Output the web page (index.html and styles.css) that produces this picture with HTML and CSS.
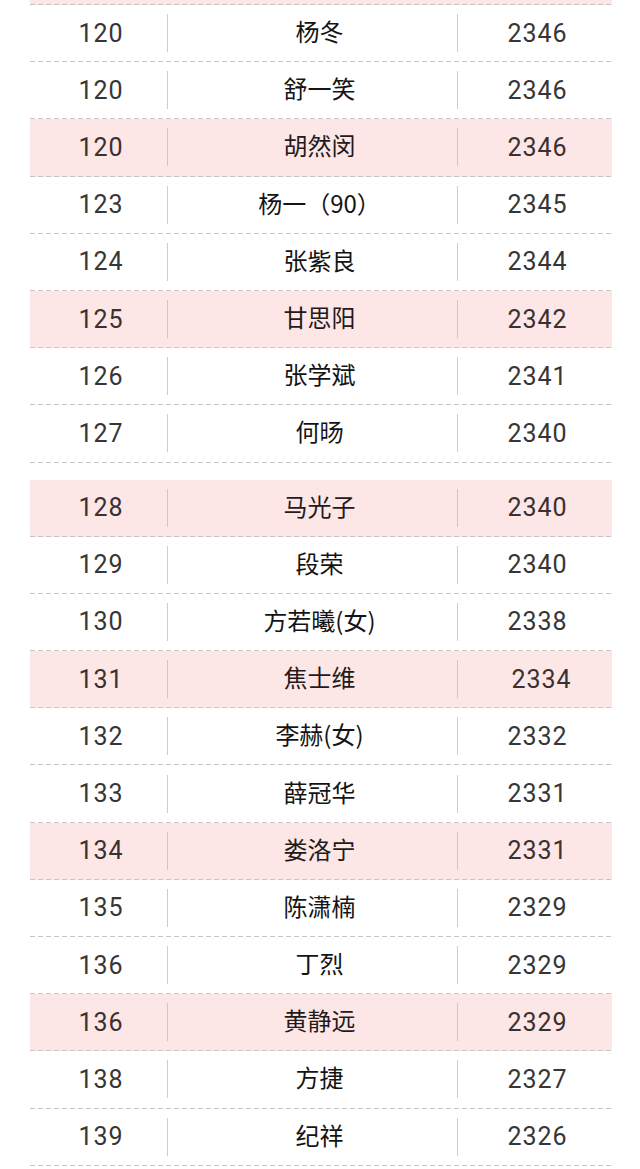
FILE: index.html
```html
<!DOCTYPE html>
<html lang="zh-CN">
<head>
<meta charset="utf-8">
<title>排名</title>
<link rel="stylesheet" href="styles.css">
</head>
<body>
<div class="sheet">
  <div class="cut pink"></div>
  <div class="block">
    <div class="row"><span class="rank">120</span><i class="sep"></i><span class="name">杨冬</span><i class="sep"></i><span class="score">2346</span></div>
    <div class="row"><span class="rank">120</span><i class="sep"></i><span class="name">舒一笑</span><i class="sep"></i><span class="score">2346</span></div>
    <div class="row pink"><span class="rank">120</span><i class="sep"></i><span class="name">胡然闵</span><i class="sep"></i><span class="score">2346</span></div>
    <div class="row"><span class="rank">123</span><i class="sep"></i><span class="name">杨一（90）</span><i class="sep"></i><span class="score">2345</span></div>
    <div class="row"><span class="rank">124</span><i class="sep"></i><span class="name">张紫良</span><i class="sep"></i><span class="score">2344</span></div>
    <div class="row pink"><span class="rank">125</span><i class="sep"></i><span class="name">甘思阳</span><i class="sep"></i><span class="score">2342</span></div>
    <div class="row"><span class="rank">126</span><i class="sep"></i><span class="name">张学斌</span><i class="sep"></i><span class="score">2341</span></div>
    <div class="row"><span class="rank">127</span><i class="sep"></i><span class="name">何旸</span><i class="sep"></i><span class="score">2340</span></div>
  </div>
  <div class="block second">
    <div class="row pink"><span class="rank">128</span><i class="sep"></i><span class="name">马光子</span><i class="sep"></i><span class="score">2340</span></div>
    <div class="row"><span class="rank">129</span><i class="sep"></i><span class="name">段荣</span><i class="sep"></i><span class="score">2340</span></div>
    <div class="row"><span class="rank">130</span><i class="sep"></i><span class="name">方若曦(女)</span><i class="sep"></i><span class="score">2338</span></div>
    <div class="row pink"><span class="rank">131</span><i class="sep"></i><span class="name">焦士维</span><i class="sep"></i><span class="score shifted">2334</span></div>
    <div class="row"><span class="rank">132</span><i class="sep"></i><span class="name">李赫(女)</span><i class="sep"></i><span class="score">2332</span></div>
    <div class="row"><span class="rank">133</span><i class="sep"></i><span class="name">薛冠华</span><i class="sep"></i><span class="score">2331</span></div>
    <div class="row pink"><span class="rank">134</span><i class="sep"></i><span class="name">娄洛宁</span><i class="sep"></i><span class="score">2331</span></div>
    <div class="row"><span class="rank">135</span><i class="sep"></i><span class="name">陈潇楠</span><i class="sep"></i><span class="score">2329</span></div>
    <div class="row"><span class="rank">136</span><i class="sep"></i><span class="name">丁烈</span><i class="sep"></i><span class="score">2329</span></div>
    <div class="row pink"><span class="rank">136</span><i class="sep"></i><span class="name">黄静远</span><i class="sep"></i><span class="score">2329</span></div>
    <div class="row"><span class="rank">138</span><i class="sep"></i><span class="name">方捷</span><i class="sep"></i><span class="score">2327</span></div>
    <div class="row"><span class="rank">139</span><i class="sep"></i><span class="name">纪祥</span><i class="sep"></i><span class="score">2326</span></div>
  </div>
</div>
</body>
</html>
```

FILE: styles.css
```css
html, body {
  margin: 0;
  padding: 0;
  background: #ffffff;
}

.sheet {
  width: 582px;
  margin-left: 30px;
  font-family: "Noto Sans CJK SC", "Noto Sans", sans-serif;
}

.cut,
.row {
  background-image: repeating-linear-gradient(to right, #c6c6c6 0 5px, transparent 5px 8px);
  background-size: 100% 1px;
  background-repeat: no-repeat;
  background-position: left bottom;
}

.cut {
  height: 5px;
}

.pink {
  background-color: #fce6e6;
}

.second {
  margin-top: 17px;
}

.row {
  display: flex;
  align-items: center;
  height: 57.2px;
  box-sizing: border-box;
  padding-bottom: 1px;
}

.sep {
  display: block;
  width: 1px;
  height: 38px;
  background: #cdcdcd;
  flex: none;
}

.pink .sep {
  background: #d3c3c3;
}

.rank,
.score {
  font-family: Roboto, "Liberation Sans", sans-serif;
  font-size: 25px;
  letter-spacing: 1px;
  color: #363636;
  text-align: center;
  box-sizing: border-box;
  padding-left: 5px;
}

.rank {
  width: 137px;
}

.name {
  width: 289px;
  box-sizing: border-box;
  padding-left: 14px;
  padding-bottom: 5px;
  text-align: center;
  font-size: 24px;
  color: #141414;
}

.score {
  width: 154px;
}

.score.shifted {
  padding-left: 13px;
}

.pink .rank,
.pink .score {
  color: #3a3030;
}

.pink .name {
  color: #241a1a;
}
```
